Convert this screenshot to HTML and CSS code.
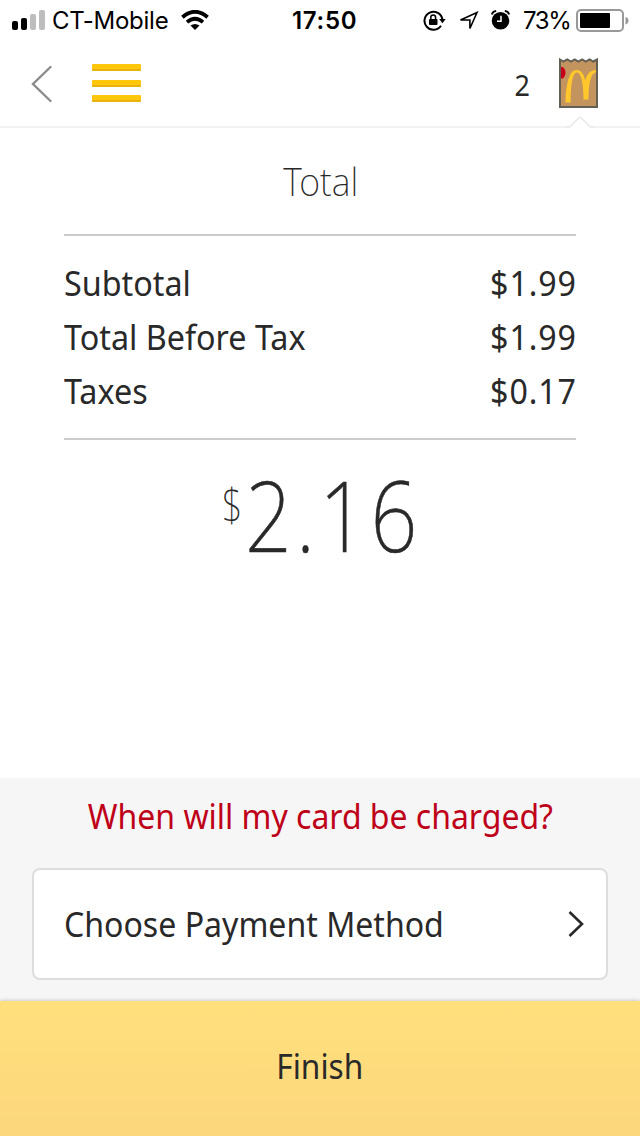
FILE: index.html
```html
<!DOCTYPE html>
<html lang="en">
<head>
<meta charset="utf-8">
<title>Total</title>
<link rel="stylesheet" href="styles.css">
</head>
<body>
<div class="screen">
  <div class="status">
    <svg class="signal" width="34" height="20" viewBox="0 0 34 20"><rect x="0" y="11" width="6" height="9" rx="2"/><rect x="9" y="8" width="6" height="12" rx="2"/><g fill="#bdbdbd"><rect x="18" y="4" width="6" height="16" rx="2"/><rect x="27" y="0" width="6" height="20" rx="2"/></g></svg>
    <span class="carrier">CT-Mobile</span>
    <svg class="wifi" width="28" height="20" viewBox="0 0 28 20"><g fill="none" stroke="#000" stroke-width="3.8"><path d="M1.4 7.2Q14-3.6 26.6 7.2"/><path d="M6 12.1Q14 5.5 22 12.1"/></g><path d="M9.500 15.6Q14 12.400 18.500 15.6L14 20Z"/></svg>
    <span class="time">17:50</span>
    <svg class="lock" width="23" height="21" viewBox="0 0 23 21"><path d="M18 15.8A9 9 0 1 1 19.400 9.500" fill="none" stroke="#000" stroke-width="2"/><path d="M16.2 9H22.7L19.4 13.3Z"/><rect x="6" y="9" width="8.500" height="6" rx="1"/><path d="M7.800 10V7.5a2.4 2.4 0 0 1 4.800 0V10" fill="none" stroke="#000" stroke-width="1.5"/></svg>
    <svg class="arrow" width="20" height="20" viewBox="0 0 20 20"><path d="M1.500 9 18 1.500 10.900 17.500V9Z" fill="none" stroke="#000" stroke-width="1.6"/></svg>
    <svg class="alarm" width="19" height="20" viewBox="0 0 19 20"><circle cx="9.5" cy="10.7" r="8.8"/><path d="M10 5.7V11.3H6" fill="none" stroke="#fff" stroke-width="1.5"/><path d="M.8 4.5Q1.5 1.5 5.2.9M18.2 4.5Q17.500 1.500 13.800.9" fill="none" stroke="#000" stroke-width="1.8"/></svg>
    <span class="percent">73%</span>
    <svg class="battery" width="53" height="24" viewBox="0 0 53 24"><rect x="1" y="1" width="46" height="21" rx="4" fill="none" stroke="#999" stroke-width="2"/><rect x="4" y="4" width="30" height="15" rx="1"/><path d="M49.500 8Q52.500 8.500 52.500 11.500T49.500 15.500Z" fill="#999"/></svg>
  </div>
  <header class="nav">
    <svg class="back" width="22" height="38" viewBox="0 0 22 38"><path d="M19.500 2 2 19 19.500 36" fill="none" stroke="#8c8c8c" stroke-width="2.400" stroke-linecap="round"/></svg>
    <div class="menu"><i></i><i></i><i></i></div>
    <span class="count">2</span>
    <svg class="bag" width="40" height="51" viewBox="0 0 40 51"><path d="M1 1.500 4.500 3.500 8.200 1.300 12 3.500 15.700 1.300 19.400 3.500 23.100 1.300 26.800 3.500 30.500 1.300 34.200 3.500 38 1.500V49H1Z" fill="#c3945d" stroke="#625f55" stroke-width="2"/><path d="M2 9H3.500Q6.500 10.500 6.500 14.500T3.500 20.500H2Z" fill="#c9001b"/><path d="M6.500 44.500C7 25 10.500 12 17.500 12 22.500 12 25.300 17 26.300 22.500 28 16 31.500 12 37 12V14.500C31.800 14.500 29.600 25 29.500 41.500H24.500C24.500 25 22 14.500 18 14.500 13.500 14.500 11.700 27 11.700 44.500Z" fill="#ffc72c"/></svg>
    <svg class="notch" width="26" height="13" viewBox="0 0 26 13"><path d="M0 13 2.500 11 13 1 23.500 11 26 13Z" fill="#fff"/><path d="M0 11H2.500L13 1 23.500 11H26" fill="none" stroke="#e8e8e8" stroke-width="1.500"/></svg>
  </header>
  <main class="summary">
    <h1 class="title"><span>Total</span></h1>
    <div class="lines">
      <div class="line"><span class="label">Subtotal</span><span class="price">$1.99</span></div>
      <div class="line"><span class="label">Total Before Tax</span><span class="price">$1.99</span></div>
      <div class="line"><span class="label">Taxes</span><span class="price">$0.17</span></div>
    </div>
    <div class="amount"><span class="currency">$</span><span class="value">2.16</span></div>
  </main>
  <section class="payment">
    <a class="question"><span>When will my card be charged?</span></a>
    <div class="choose"><span>Choose Payment Method</span><svg width="16" height="28" viewBox="0 0 16 28"><path d="M1.500 2 14 14 1.500 26" fill="none" stroke="#292929" stroke-width="2.600"/></svg></div>
  </section>
  <div class="finish"><span>Finish</span></div>
</div>
</body>
</html>
```
FILE: styles.css
```css
* { box-sizing: border-box; }
body { margin: 0; background: #fff; color: #292929; font-family: "Noto Sans", "Open Sans", sans-serif; }
svg { display: block; flex: none; }
span { display: inline-block; white-space: nowrap; }
.screen { width: 640px; height: 1136px; display: flex; flex-direction: column; overflow: hidden; }
.status { height: 41px; display: flex; align-items: flex-start; flex: none; padding-left: 12px; color: #000; font: 24px/41px Inter, sans-serif; }
.signal { margin-top: 10px; }
.carrier { width: 128px; margin-left: 6px; letter-spacing: -0.25px; }
.wifi { margin: 10px 0 0 1px; }
.time { width: 70px; margin-left: 83px; font-weight: 600; letter-spacing: 0.7px; }
.lock { margin: 10px 0 0 61px; }
.arrow { margin: 11px 0 0 13px; }
.alarm { margin: 10px 0 0 12px; }
.percent { width: 50px; margin-left: 13px; letter-spacing: -1.4px; }
.battery { margin: 9px 0 0 3px; }
.nav { height: 87px; flex: none; position: relative; display: flex; align-items: flex-start; padding-left: 31px; border-bottom: 2px solid #f2f2f2; }
.back { margin-top: 24px; }
.menu { width: 49px; margin: 23px 0 0 39px; display: grid; gap: 8.5px; }
.menu i { height: 7px; border-radius: 1px; background: linear-gradient(#ffc60c 0 70%, #e9b30c 70%); }
.count { width: 17px; margin: 24px 0 0 373px; font-size: 29px; line-height: 40px; transform: scaleX(.93); }
.bag { margin: 17px 0 0 28px; }
.notch { position: absolute; left: 567px; top: 75px; }
.summary { height: 650px; flex: none; padding: 0 64px; }
.title { margin: 0; height: 106px; padding: 22px 0 0 2px; font-size: 39px; font-weight: 200; line-height: 62px; text-align: center; }
.title span { transform: scaleX(.92); }
.lines { height: 206px; padding-top: 20px; border: solid #ccc; border-width: 2px 0; }
.line { display: flex; justify-content: space-between; font-size: 34px; line-height: 54px; }
.label { transform: scaleX(.95); transform-origin: left; }
.price { letter-spacing: 1px; margin-right: -1px; transform: scaleX(.945); transform-origin: right; }
.amount { display: flex; padding: 14px 0 0 158px; font-weight: 200; }
.currency { font-size: 46px; line-height: 100px; transform: scaleX(.78); transform-origin: left; }
.value { margin-left: -3px; font-size: 98px; line-height: 120px; letter-spacing: 5px; transform: scaleX(.84); transform-origin: left; -webkit-text-stroke: .6px #292929; }
.payment { height: 223px; flex: none; padding: 0 32px; background: #f6f6f6; }
.question { display: block; height: 90px; color: #bf0019; font-size: 34px; line-height: 77px; text-align: center; }
.question span { transform: scaleX(.94); }
.choose { height: 112px; display: flex; align-items: center; justify-content: space-between; padding: 0 22px 0 30px; border: 2px solid #ddd; border-radius: 8px; background: #fff; font-size: 34px; }
.choose span { transform: scaleX(.943); transform-origin: left; }
.finish { height: 135px; flex: none; background: linear-gradient(#ffe07d, #fcd77c); box-shadow: 0 0 4px rgba(0,0,0,.25); font-size: 34px; line-height: 131px; text-align: center; }
.finish span { transform: scaleX(.93); }
```
